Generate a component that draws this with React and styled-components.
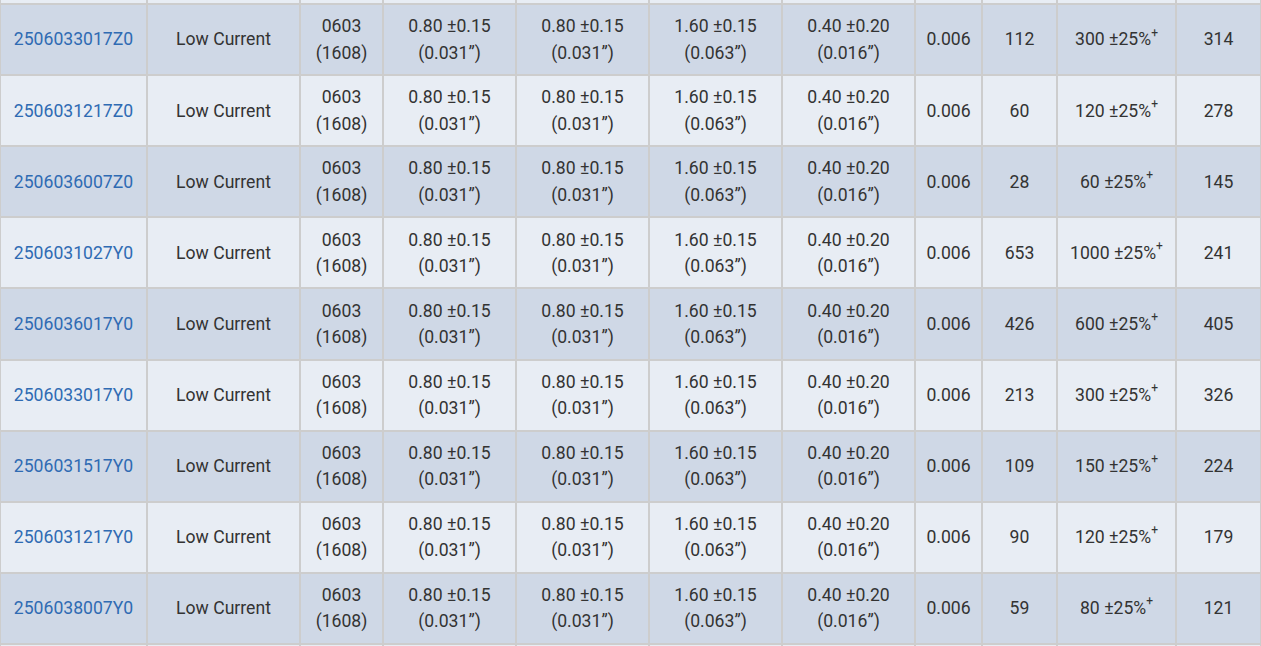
import React from "react";
import styled, { createGlobalStyle } from "styled-components";

const GlobalStyle = createGlobalStyle`
  html, body {
    margin: 0;
    padding: 0;
    background: #e8edf4;
    overflow: hidden;
  }
  body {
    font-family: Roboto, "Liberation Sans", Arial, sans-serif;
  }
`;

const widths = [147, 153, 83, 133, 133, 133, 133, 67, 75, 119, 85];

const rows = [
  { pn: "2506031017Z0", r: "85", z: "100", i: "300" },
  { pn: "2506033017Z0", r: "112", z: "300", i: "314" },
  { pn: "2506031217Z0", r: "60", z: "120", i: "278" },
  { pn: "2506036007Z0", r: "28", z: "60", i: "145" },
  { pn: "2506031027Y0", r: "653", z: "1000", i: "241" },
  { pn: "2506036017Y0", r: "426", z: "600", i: "405" },
  { pn: "2506033017Y0", r: "213", z: "300", i: "326" },
  { pn: "2506031517Y0", r: "109", z: "150", i: "224" },
  { pn: "2506031217Y0", r: "90", z: "120", i: "179" },
  { pn: "2506038007Y0", r: "59", z: "80", i: "121" },
  { pn: "2506036007Y0", r: "25", z: "60", i: "95" },
];

const Viewport = styled.div`
  height: 100vh;
  overflow: hidden;
`;

const Table = styled.table`
  width: calc(100% + 2px);
  margin: -68px 0 0 -1px;
  border-collapse: collapse;
  table-layout: fixed;
  color: #333;
  font-size: 17.6px;
  line-height: 26.4px;
`;

const Row = styled.tr`
  background: ${(p) => (p.$dark ? "#cfd8e6" : "#e8edf4")};
`;

const Cell = styled.td`
  border: 2px solid #cdcdcd;
  padding: 8.15px 4px;
  text-align: center;
  vertical-align: middle;
  white-space: nowrap;
`;

const PartLink = styled.a`
  color: #2f6bb3;
  text-decoration: none;
`;

const Sup = styled.sup`
  font-size: 12px;
  line-height: 0;
  position: relative;
  top: -2px;
`;

const Dim = ({ v, tol, inch }) => (
  <>
    {v} ±{tol}
    <br />({inch}”)
  </>
);

export default function App() {
  return (
    <Viewport>
      <GlobalStyle />
      <Table>
        <colgroup>
          {widths.map((w, i) => (
            <col key={i} style={{ width: w }} />
          ))}
        </colgroup>
        <tbody>
          {rows.map((row, idx) => (
            <Row key={row.pn} $dark={idx % 2 === 1}>
              <Cell>
                <PartLink href="#">{row.pn}</PartLink>
              </Cell>
              <Cell>Low Current</Cell>
              <Cell>
                0603
                <br />
                (1608)
              </Cell>
              <Cell>
                <Dim v="0.80" tol="0.15" inch="0.031" />
              </Cell>
              <Cell>
                <Dim v="0.80" tol="0.15" inch="0.031" />
              </Cell>
              <Cell>
                <Dim v="1.60" tol="0.15" inch="0.063" />
              </Cell>
              <Cell>
                <Dim v="0.40" tol="0.20" inch="0.016" />
              </Cell>
              <Cell>0.006</Cell>
              <Cell>{row.r}</Cell>
              <Cell>
                {row.z} ±25%<Sup>+</Sup>
              </Cell>
              <Cell>{row.i}</Cell>
            </Row>
          ))}
        </tbody>
      </Table>
    </Viewport>
  );
}
